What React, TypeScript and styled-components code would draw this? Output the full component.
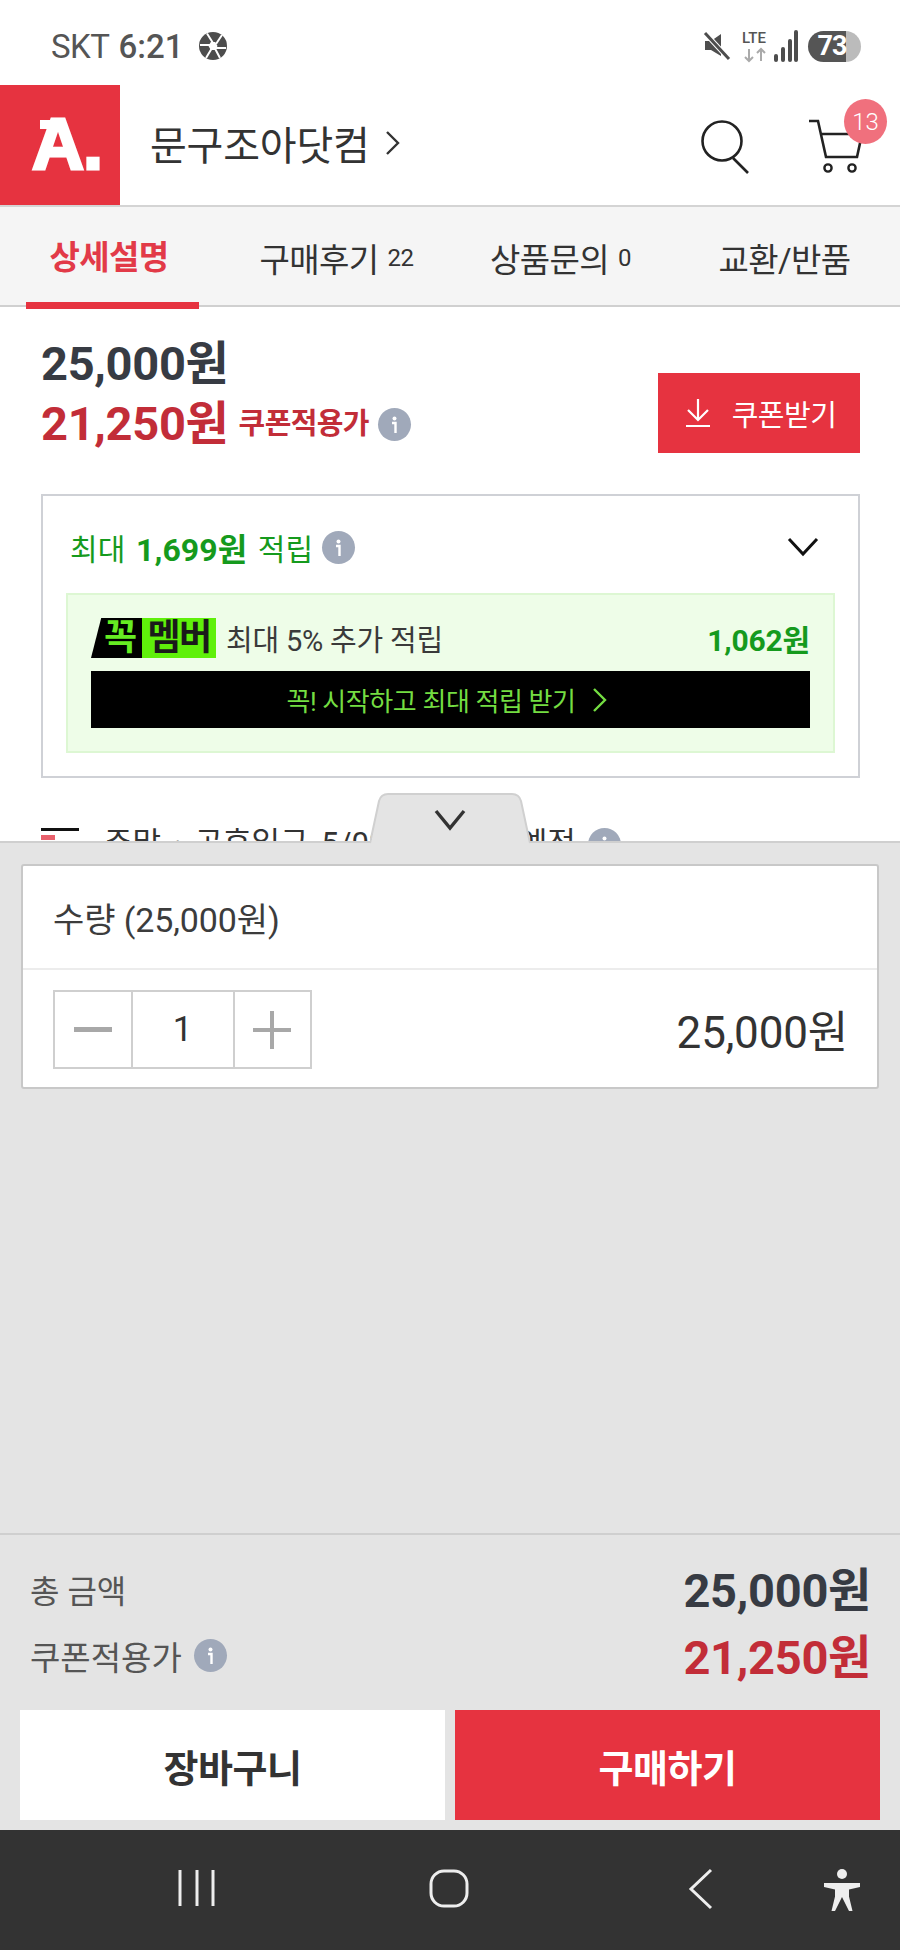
import React from "react";
import styled, { createGlobalStyle } from "styled-components";

const Global = createGlobalStyle`
  html, body { margin: 0; padding: 0; background: #fff; }
  * { box-sizing: border-box; }
  body { font-family: Roboto, "Noto Sans CJK KR", "Liberation Sans", sans-serif; color: #333; }
`;

const Page = styled.div`
  width: 900px;
  height: 1950px;
  display: flex;
  flex-direction: column;
  overflow: hidden;
`;

const StatusBar = styled.div`
  height: 85px;
  padding: 7px 39px 0 51px;
  display: flex;
  align-items: center;
  color: #555;
`;
const Carrier = styled.span`
  font-size: 33px;
  letter-spacing: -0.5px;
  line-height: 1;
`;
const Clock = styled.span`
  font-size: 33px;
  font-weight: 500;
  margin-left: 9px;
  line-height: 1;
`;
const StatusRight = styled.div`
  margin-left: auto;
  display: flex;
  align-items: center;
`;
const Battery = styled.div`
  width: 53px;
  height: 31px;
  border-radius: 16px;
  margin-left: 10px;
  background: linear-gradient(90deg, #555 0 38px, #bbb 38px 53px);
  color: #fff;
  font-size: 27px;
  font-weight: 700;
  display: flex;
  align-items: center;
  justify-content: center;
  padding-right: 5px;
  letter-spacing: -1px;
`;

const Header = styled.div`
  height: 122px;
  display: flex;
  align-items: center;
  border-bottom: 2px solid #d4d4d4;
  position: relative;
`;
const Logo = styled.div`
  width: 120px;
  height: 120px;
  align-self: flex-start;
  position: relative;
  background: #e63340;
  color: #fff;
  font-family: "Liberation Sans", sans-serif;
  font-weight: 700;
  font-size: 72px;
  display: flex;
  align-items: center;
  justify-content: center;
  letter-spacing: -1px;
  -webkit-text-stroke: 3px #fff;
  padding: 0 0 2px 14px;
  &::before {
    content: "";
    position: absolute;
    left: 40px;
    top: 35px;
    width: 26px;
    height: 9px;
    background: #fff;
  }
`;
const StoreName = styled.div`
  margin-left: 30px;
  font-size: 40px;
  letter-spacing: -0.2px;
  color: #333;
  display: flex;
  align-items: center;
  gap: 15px;
  margin-top: -5px;
`;
const HeaderIcons = styled.div`
  margin-left: auto;
  position: relative;
  width: 200px;
  height: 120px;
  flex: none;
`;
const SearchIcon = styled.svg`
  position: absolute;
  left: 1px;
  top: 33px;
`;
const CartIcon = styled.svg`
  position: absolute;
  left: 107px;
  top: 33px;
`;
const CartBadge = styled.div`
  position: absolute;
  left: 144px;
  top: 14px;
  width: 43px;
  height: 45px;
  border-radius: 50%;
  background: #f0707d;
  color: #fff;
  font-size: 24px;
  font-weight: 300;
  display: flex;
  align-items: center;
  justify-content: center;
`;

const Tabs = styled.div`
  height: 100px;
  background: #f5f5f5;
  border-bottom: 2px solid #d0d0d0;
  padding-left: 26px;
  display: flex;
  gap: 51px;
`;
const Tab = styled.div<{ $active?: boolean }>`
  width: 173px;
  height: 102px;
  flex: none;
  display: flex;
  align-items: center;
  justify-content: center;
  white-space: nowrap;
  gap: 9px;
  padding-top: ${(p) => (p.$active ? "1px" : "0")};
  padding-right: ${(p) => (p.$active ? "7px" : "0")};
  font-size: 33px;
  letter-spacing: -0.6px;
  color: ${(p) => (p.$active ? "#e23a48" : "#333")};
  font-weight: ${(p) => (p.$active ? 700 : 400)};
  border-bottom: ${(p) => (p.$active ? "7px solid #e63340" : "none")};
`;
const TabCount = styled.span`
  font-size: 24px;
  letter-spacing: -0.5px;
`;

const Content = styled.div`
  height: 534px;
  overflow: hidden;
  padding: 0 40px 0 41px;
  position: relative;
`;
const PriceRow = styled.div`
  display: flex;
  justify-content: space-between;
  align-items: flex-start;
  height: 187px;
`;
const PriceCol = styled.div`
  display: flex;
  flex-direction: column;
  padding-top: 31px;
  gap: 8px;
`;
const Price = styled.div<{ $red?: boolean }>`
  font-size: 47px;
  line-height: 52px;
  font-weight: 700;
  letter-spacing: -0.3px;
  color: ${(p) => (p.$red ? "#c22d38" : "#373b43")};
  display: flex;
  align-items: center;
`;
const Won = styled.span`
  font-size: 47px;
`;
const CouponLabel = styled.span`
  font-size: 29px;
  letter-spacing: -0.6px;
  margin-left: 10px;
  margin-right: 9px;
`;
const InfoDot = styled.span`
  width: 33px;
  height: 33px;
  border-radius: 50%;
  background: #a0a9ba;
  display: inline-flex;
  align-items: center;
  justify-content: center;
  flex: none;
`;
const CouponButton = styled.div`
  width: 202px;
  height: 80px;
  margin-top: 66px;
  background: #e63340;
  color: #fff;
  font-size: 29px;
  letter-spacing: -0.5px;
  display: flex;
  align-items: center;
  justify-content: center;
  gap: 22px;
  padding-left: 4px;
`;
const PointsBox = styled.div`
  height: 284px;
  border: 2px solid #cfd1d6;
  padding: 0 24px;
  display: flex;
  flex-direction: column;
`;
const PointsHead = styled.div`
  height: 97px;
  display: flex;
  align-items: center;
  padding: 5px 4px 0 3px;
  font-size: 30px;
  letter-spacing: 0.1px;
  word-spacing: 3px;
  color: #159a1d;
  white-space: pre;
`;
const Strong = styled.strong`
  font-weight: 700;
  font-size: 32px;
`;
const HeadInfo = styled.span`
  margin-left: 9px;
  display: inline-flex;
`;
const HeadChevron = styled.svg`
  margin-left: auto;
  margin-right: 11px;
`;
const MemberBox = styled.div`
  height: 160px;
  margin: 0 -1px;
  background: #eefde8;
  border: 2px solid #ddf7d3;
  padding: 23px 23px 0;
  display: flex;
  flex-direction: column;
`;
const MemberRow = styled.div`
  height: 40px;
  display: flex;
  align-items: center;
  font-size: 29px;
  letter-spacing: -0.2px;
  color: #3a3a3a;
`;
const Badge = styled.div`
  display: flex;
  height: 40px;
  width: 125px;
  flex: none;
  margin-right: 10px;
`;
const BadgeDark = styled.div`
  width: 51px;
  background: #000;
  color: #66ec22;
  clip-path: polygon(20% 0, 100% 0, 100% 100%, 0 100%);
  font-size: 36px;
  font-weight: 700;
  display: flex;
  align-items: center;
  justify-content: center;
  padding-left: 8px;
  line-height: 1;
`;
const BadgeLight = styled.div`
  flex: 1;
  background: #5ff00a;
  color: #1a1a1a;
  font-size: 36px;
  font-weight: 700;
  display: flex;
  align-items: center;
  justify-content: center;
  letter-spacing: -1.5px;
  line-height: 1;
`;
const MemberAmount = styled.span`
  margin-left: auto;
  font-size: 30px;
  font-weight: 700;
  color: #159a1d;
  letter-spacing: -0.2px;
`;
const MemberCta = styled.div`
  margin-top: 13px;
  height: 57px;
  background: #000;
  color: #74dd42;
  font-size: 26px;
  display: flex;
  align-items: center;
  justify-content: center;
  gap: 16px;
  letter-spacing: -0.4px;
  padding-right: 8px;
`;
const Delivery = styled.div`
  margin-top: 44px;
  display: flex;
  align-items: flex-start;
  font-size: 31px;
  line-height: 44px;
  word-spacing: 5px;
  color: #333;
  white-space: pre;
  gap: 25px;
`;
const DeliveryInfo = styled.span`
  margin-left: -13px;
  display: inline-flex;
  margin-top: 6px;
`;
const DeliveryMark = styled.span`
  width: 38px;
  height: 30px;
  margin-top: 6px;
  flex: none;
  position: relative;
  border-top: 3px solid #111;
  &::after {
    content: "";
    position: absolute;
    left: 0;
    top: 4px;
    width: 14px;
    height: 5px;
    background: #e8606c;
  }
`;

const Panel = styled.div`
  flex: 1;
  background: #e4e4e4;
  border-top: 2px solid #cfcfcf;
  position: relative;
  display: flex;
  flex-direction: column;
`;
const Handle = styled.svg`
  position: absolute;
  left: 370px;
  top: -50px;
`;
const Card = styled.div`
  margin: 21px 21px 0;
  height: 225px;
  background: #fff;
  border: 2px solid #c8c8c8;
  border-radius: 3px;
  flex: none;
`;
const CardTitle = styled.div`
  height: 104px;
  border-bottom: 2px solid #ececec;
  padding: 0 30px;
  display: flex;
  align-items: center;
  font-size: 34px;
  letter-spacing: -0.1px;
  color: #3c3c3c;
`;
const CardBody = styled.div`
  height: 117px;
  padding: 0 29px 0 30px;
  display: flex;
  align-items: center;
  justify-content: space-between;
`;
const Stepper = styled.div`
  width: 259px;
  height: 79px;
  border: 2px solid #cfcfcf;
  display: flex;
  margin-top: 2px;
`;
const StepCell = styled.div<{ $wide?: boolean }>`
  width: ${(p) => (p.$wide ? "102px" : "auto")};
  flex: ${(p) => (p.$wide ? "none" : 1)};
  display: flex;
  align-items: center;
  justify-content: center;
  font-size: 35px;
  color: #333;
  & + & {
    border-left: 2px solid #cfcfcf;
  }
`;
const LineAmount = styled.div`
  font-size: 44px;
  letter-spacing: -0.2px;
  color: #333;
`;
const Spacer = styled.div`
  flex: 1;
`;
const Summary = styled.div`
  height: 177px;
  flex: none;
  border-top: 2px solid #cfcfcf;
  padding: 23px 29px 0 30px;
  display: flex;
  flex-direction: column;
  gap: 1px;
`;
const SummaryRow = styled.div`
  height: 66px;
  display: flex;
  align-items: center;
  justify-content: space-between;
`;
const SummaryLabel = styled.div<{ $wide?: boolean }>`
  font-size: ${(p) => (p.$wide ? 33 : 32)}px;
  color: #555;
  display: flex;
  align-items: center;
  gap: 12px;
  margin-top: -5px;
`;
const Buttons = styled.div`
  height: 120px;
  flex: none;
  padding: 0 20px;
  display: flex;
  gap: 10px;
`;
const ActionButton = styled.div<{ $primary?: boolean }>`
  flex: 1;
  height: 110px;
  background: ${(p) => (p.$primary ? "#e63340" : "#fff")};
  color: ${(p) => (p.$primary ? "#fff" : "#333")};
  font-size: 38px;
  font-weight: 700;
  letter-spacing: -0.5px;
  display: flex;
  align-items: center;
  justify-content: center;
`;
const NavBar = styled.div`
  height: 120px;
  flex: none;
  background: #333;
  position: relative;
`;
const NavIcon = styled.svg<{ $x: number }>`
  position: absolute;
  left: ${(p) => p.$x}px;
  top: 38px;
`;

const Info = () => (
  <InfoDot>
    <svg width="33" height="33" viewBox="0 0 33 33" fill="none">
      <circle cx="16.5" cy="10.5" r="2" fill="#fff" />
      <path d="M14 15h3.5v10" stroke="#fff" strokeWidth="2.4" />
    </svg>
  </InfoDot>
);

const Aperture = () => (
  <svg width="30" height="30" viewBox="0 0 30 30" style={{ marginLeft: 15 }}>
    <circle cx="15" cy="15" r="14" fill="#4d4d4d" />
    <g stroke="#fff" strokeWidth="2" fill="none">
      <path d="M9 2.5 15 12M24 4l-6 9M28 17H17M22 27l-5-9.5M8 27l6-10M2 14h12" />
    </g>
    <path d="M10.5 15l2.3-4h4.4l2.3 4-2.3 4h-4.4z" fill="#fff" />
  </svg>
);

const ArrowChevron = ({ w, h, stroke, sw }: { w: number; h: number; stroke: string; sw: number }) => (
  <svg width={w} height={h} viewBox={`0 0 ${w} ${h}`} fill="none">
    <path d={`M2 2 L${w - 2} ${h / 2} L2 ${h - 2}`} stroke={stroke} strokeWidth={sw} />
  </svg>
);

export default function App() {
  return (
    <Page>
      <Global />
      <StatusBar>
        <Carrier>SKT</Carrier>
        <Clock>6:21</Clock>
        <Aperture />
        <StatusRight>
          <svg width="28" height="30" viewBox="0 0 28 30" fill="none">
            <path d="M2 10h6l10-7v22L8 19H2z" fill="#4d4d4d" />
            <path d="M2 2l24 26" stroke="#fff" strokeWidth="5" />
            <path d="M2 2l24 26" stroke="#4d4d4d" strokeWidth="3" />
          </svg>
          <svg width="58" height="36" viewBox="0 0 58 36" fill="none" style={{ marginLeft: 9 }}>
            <text x="2" y="15" fontSize="15" fontWeight="500" fill="#555" fontFamily="Roboto">LTE</text>
            <path d="M9 21v12M5 29l4 4 4-4" stroke="#aaa" strokeWidth="2" />
            <path d="M21 33V21M17 25l4-4 4 4" stroke="#aaa" strokeWidth="2" />
            <g fill="#4d4d4d">
              <rect x="34" y="26" width="4" height="8" rx="2" />
              <rect x="41" y="19" width="4" height="15" rx="2" />
              <rect x="48" y="11" width="4" height="23" rx="2" />
              <rect x="54" y="2" width="4" height="32" rx="2" />
            </g>
          </svg>
          <Battery>73</Battery>
        </StatusRight>
      </StatusBar>

      <Header>
        <Logo>A.</Logo>
        <StoreName>
          문구조아닷컴
          <ArrowChevron w={15} h={26} stroke="#333" sw={2.4} />
        </StoreName>
        <HeaderIcons>
          <SearchIcon width="54" height="58" viewBox="0 0 54 58" fill="none">
            <circle cx="21" cy="23" r="19.5" stroke="#222" strokeWidth="2.6" />
            <path d="M32 40l15 15" stroke="#222" strokeWidth="2.6" />
          </SearchIcon>
          <CartIcon width="58" height="58" viewBox="0 0 58 58" fill="none">
            <path d="M2 3h9l8 36h31l5-23H14" stroke="#222" strokeWidth="2.6" />
            <circle cx="21" cy="50" r="3.6" stroke="#222" strokeWidth="2.4" />
            <circle cx="45" cy="50" r="3.6" stroke="#222" strokeWidth="2.4" />
          </CartIcon>
          <CartBadge>13</CartBadge>
        </HeaderIcons>
      </Header>

      <Tabs>
        <Tab $active>상세설명</Tab>
        <Tab>
          구매후기<TabCount>22</TabCount>
        </Tab>
        <Tab>
          상품문의<TabCount>0</TabCount>
        </Tab>
        <Tab>교환/반품</Tab>
      </Tabs>

      <Content>
        <PriceRow>
          <PriceCol>
            <Price>
              25,000<Won>원</Won>
            </Price>
            <Price $red>
              21,250<Won>원</Won>
              <CouponLabel>쿠폰적용가</CouponLabel>
              <Info />
            </Price>
          </PriceCol>
          <CouponButton>
            <svg width="24" height="30" viewBox="0 0 24 30" fill="none">
              <path d="M12 1v21M2 12l10 10 10-10M0 28h24" stroke="#fff" strokeWidth="2.2" />
            </svg>
            쿠폰받기
          </CouponButton>
        </PriceRow>

        <PointsBox>
          <PointsHead>
            최대 <Strong>1,699원</Strong> 적립
            <HeadInfo>
              <Info />
            </HeadInfo>
            <HeadChevron width="32" height="20" viewBox="0 0 32 20" fill="none">
              <path d="M2 2l14 15L30 2" stroke="#111" strokeWidth="3" />
            </HeadChevron>
          </PointsHead>
          <MemberBox>
            <MemberRow>
              <Badge>
                <BadgeDark>꼭</BadgeDark>
                <BadgeLight>멤버</BadgeLight>
              </Badge>
              최대 5% 추가 적립
              <MemberAmount>1,062원</MemberAmount>
            </MemberRow>
            <MemberCta>
              꼭! 시작하고 최대 적립 받기
              <ArrowChevron w={15} h={26} stroke="#74dd42" sw={2.4} />
            </MemberCta>
          </MemberBox>
        </PointsBox>

        <Delivery>
          <DeliveryMark />
          주말 · 공휴일구 5/09(금) 도착 예정
          <DeliveryInfo>
            <Info />
          </DeliveryInfo>
        </Delivery>
      </Content>

      <Panel>
        <Handle width="160" height="52" viewBox="0 0 160 52" fill="none">
          <path d="M0 52 L9 8 Q11 1 18 1 H142 Q149 1 151 8 L160 52 Z" fill="#e4e4e4" />
          <path d="M0 50 L9 8 Q11 1 18 1 H142 Q149 1 151 8 L160 50" stroke="#d0d0d0" strokeWidth="2" />
          <path d="M66 18l14 17 14-17" stroke="#333" strokeWidth="3.4" />
        </Handle>
        <Card>
          <CardTitle>수량 (25,000원)</CardTitle>
          <CardBody>
            <Stepper>
              <StepCell>
                <svg width="38" height="6" viewBox="0 0 38 6">
                  <rect width="38" height="5" fill="#a8a8a8" />
                </svg>
              </StepCell>
              <StepCell $wide>1</StepCell>
              <StepCell>
                <svg width="38" height="38" viewBox="0 0 38 38">
                  <path d="M0 19h38M19 0v38" stroke="#a8a8a8" strokeWidth="4" />
                </svg>
              </StepCell>
            </Stepper>
            <LineAmount>25,000원</LineAmount>
          </CardBody>
        </Card>
        <Spacer />
        <Summary>
          <SummaryRow>
            <SummaryLabel>총 금액</SummaryLabel>
            <Price>
              25,000<Won>원</Won>
            </Price>
          </SummaryRow>
          <SummaryRow>
            <SummaryLabel $wide>
              쿠폰적용가
              <Info />
            </SummaryLabel>
            <Price $red>
              21,250<Won>원</Won>
            </Price>
          </SummaryRow>
        </Summary>
        <Buttons>
          <ActionButton>장바구니</ActionButton>
          <ActionButton $primary>구매하기</ActionButton>
        </Buttons>
        <NavBar>
          <NavIcon $x={178} width="38" height="42" viewBox="0 0 38 42" fill="none">
            <path d="M2 2v36M19 2v36M35 2v36" stroke="#eee" strokeWidth="3" />
          </NavIcon>
          <NavIcon $x={429} width="40" height="42" viewBox="0 0 40 42" fill="none">
            <rect x="2" y="3" width="36" height="35" rx="13" stroke="#eee" strokeWidth="3" />
          </NavIcon>
          <NavIcon $x={688} width="26" height="42" viewBox="0 0 26 42" fill="none">
            <path d="M23 2L3 21l20 19" stroke="#eee" strokeWidth="3" />
          </NavIcon>
          <NavIcon $x={823} width="38" height="44" viewBox="0 0 38 44" fill="#eee">
            <circle cx="19" cy="6" r="5" />
            <path d="M1 15h36v4l-11 2.500v7l3.500 14.500h-3.500l-7-14-7 14H8.500l3.500-14.500v-7L1 19z" />
          </NavIcon>
        </NavBar>
      </Panel>
    </Page>
  );
}
